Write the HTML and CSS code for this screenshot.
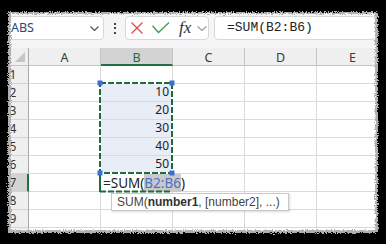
FILE: index.html
```html
<!DOCTYPE html>
<html>
<head>
<meta charset="utf-8">
<link rel="stylesheet" href="styles.css">
</head>
<body>
<div class="app">
  <div class="toolbar">
    <div class="namebox">
      <span class="nb-text">ABS</span>
      <svg class="chev" width="9" height="5" viewBox="0 0 9 5"><path d="M0.5 0.5 L4.5 4.5 L8.5 0.5" fill="none" stroke="#555" stroke-width="1.2"/></svg>
    </div>
    <div class="dots"><i></i><i></i><i></i></div>
    <div class="fxbox">
      <svg class="ico-x" width="12" height="12" viewBox="0 0 12 12"><path d="M0.5 0.5 L11.5 11.5 M11.5 0.5 L0.5 11.5" fill="none" stroke="#e5484d" stroke-width="1.3"/></svg>
      <svg class="ico-ok" width="18" height="12" viewBox="0 0 18 12"><path d="M0.5 3.8 L6.5 10.5 L17 0.5" fill="none" stroke="#3f9b54" stroke-width="1.3"/></svg>
      <span class="fx">fx</span>
      <svg class="chev2" width="10" height="5" viewBox="0 0 10 5"><path d="M0.5 0.5 L5 4.5 L9.5 0.5" fill="none" stroke="#9a9a9a" stroke-width="1.1"/></svg>
    </div>
    <div class="formula">=SUM(B2:B6)</div>
  </div>

  <div class="sheet">
    <div class="corner"><span class="tri"></span></div>
    <div class="colhead">A</div>
    <div class="colhead sel">B</div>
    <div class="colhead">C</div>
    <div class="colhead">D</div>
    <div class="colhead">E</div>

    <div class="rowhead">1</div><div class="cell"></div><div class="cell"></div><div class="cell"></div><div class="cell"></div><div class="cell"></div>
    <div class="rowhead">2</div><div class="cell"></div><div class="cell num in">10</div><div class="cell"></div><div class="cell"></div><div class="cell"></div>
    <div class="rowhead">3</div><div class="cell"></div><div class="cell num in">20</div><div class="cell"></div><div class="cell"></div><div class="cell"></div>
    <div class="rowhead">4</div><div class="cell"></div><div class="cell num in">30</div><div class="cell"></div><div class="cell"></div><div class="cell"></div>
    <div class="rowhead">5</div><div class="cell"></div><div class="cell num in">40</div><div class="cell"></div><div class="cell"></div><div class="cell"></div>
    <div class="rowhead">6</div><div class="cell"></div><div class="cell num in">50</div><div class="cell"></div><div class="cell"></div><div class="cell"></div>
    <div class="rowhead active">7</div><div class="cell"></div><div class="cell edit"><span>=SUM(<span class="ref">B2:B6</span>)</span></div><div class="cell"></div><div class="cell"></div><div class="cell"></div>
    <div class="rowhead">8</div><div class="cell"></div><div class="cell"></div><div class="cell"></div><div class="cell"></div><div class="cell"></div>
    <div class="rowhead">9</div><div class="cell"></div><div class="cell"></div><div class="cell"></div><div class="cell"></div><div class="cell"></div>
    <div class="rowhead">10</div><div class="cell"></div><div class="cell"></div><div class="cell"></div><div class="cell"></div><div class="cell"></div>
  </div>

  <svg class="range" width="386" height="244" viewBox="0 0 386 244">
    <rect x="100" y="83" width="72" height="90" fill="none" stroke="#fff" stroke-width="2"/>
    <rect x="100" y="83" width="72" height="90" fill="none" stroke="#1d6b3f" stroke-width="2" stroke-dasharray="6 2"/>
    <path d="M100 173 V192" stroke="#1d6b3f" stroke-width="2"/>
    <path d="M100 191.5 H172" stroke="#1d6b3f" stroke-width="2" stroke-dasharray="6 2"/>
    <rect x="97.5" y="80.5" width="5" height="5" fill="#3b6fd4"/>
    <rect x="169.5" y="80.5" width="5" height="5" fill="#3b6fd4"/>
    <rect x="97.5" y="170.5" width="5" height="5" fill="#3b6fd4"/>
    <rect x="169.5" y="170.5" width="5" height="5" fill="#3b6fd4"/>
  </svg>

  <div class="tip">SUM(<b>number1</b>, [number2], ...)</div>
</div>

<svg class="torn" width="386" height="244" viewBox="0 0 386 244">
  <defs>
    <filter id="rough" x="-10%" y="-10%" width="120%" height="120%">
      <feTurbulence type="fractalNoise" baseFrequency="0.9" numOctaves="2" seed="5" result="n"/>
      <feDisplacementMap in="SourceGraphic" in2="n" scale="5" xChannelSelector="R" yChannelSelector="G"/>
    </filter>
  </defs>
  <path fill-rule="evenodd" fill="#b0b0b0" filter="url(#rough)" d="M-20 -20 H406 V264 H-20 Z M11 14 H375 V230 H11 Z"/>
  <path fill-rule="evenodd" fill="#000" filter="url(#rough)" d="M-20 -20 H406 V264 H-20 Z M9 12 H377 Q378 12 378 13 V232 Q378 233 377 233 H9 Q8 233 8 232 V13 Q8 12 9 12 Z"/>
</svg>
</body>
</html>
```

FILE: styles.css
```css
body {
  margin: 0;
  width: 386px;
  height: 244px;
  background: #000;
  overflow: hidden;
  position: relative;
  font-family: "Noto Sans", "Liberation Sans", sans-serif;
}

.app {
  position: relative;
  width: 386px;
  height: 244px;
  background: #fff;
  overflow: hidden;
}

/* ---------- formula bar ---------- */
.toolbar {
  display: flex;
  align-items: center;
  height: 48px;
  padding-top: 8px;
  box-sizing: border-box;
  background: #f5f5f5;
}

.namebox {
  margin-left: 4px;
  width: 100px;
  height: 24px;
  box-sizing: border-box;
  background: #fff;
  border: 1px solid #d8d8d8;
  border-radius: 4px;
  display: flex;
  align-items: center;
  justify-content: space-between;
  padding: 0 4px 0 6px;
}

.nb-text {
  font-size: 12.5px;
  color: #2c4677;
  line-height: 16px;
}

.dots {
  margin-left: 10px;
  display: flex;
  flex-direction: column;
  gap: 2.5px;
}

.dots i {
  display: block;
  width: 2px;
  height: 2px;
  background: #444;
}

.fxbox {
  margin-left: 9px;
  width: 84px;
  height: 24px;
  box-sizing: border-box;
  background: #fff;
  border: 1px solid #d8d8d8;
  border-radius: 4px;
  display: flex;
  align-items: center;
  padding-left: 5px;
}

.ico-ok { margin-left: 9px; }

.fx {
  margin-left: 9px;
  font-family: "Liberation Serif", "DejaVu Serif", serif;
  font-style: italic;
  font-size: 17px;
  line-height: 18px;
  color: #333;
  width: 15px;
}

.chev2 { margin-left: 3px; }

.formula {
  margin-left: 5px;
  margin-right: 10px;
  flex: 1;
  height: 24px;
  box-sizing: border-box;
  background: #fff;
  border: 1px solid #d8d8d8;
  border-radius: 4px;
  padding-left: 12px;
  font-family: "Liberation Mono", "DejaVu Sans Mono", monospace;
  font-size: 13px;
  line-height: 22px;
  color: #222;
}

/* ---------- sheet ---------- */
.sheet {
  display: grid;
  grid-template-columns: 29px repeat(5, 72px);
  grid-auto-rows: 18px;
}

.sheet > div {
  box-sizing: border-box;
  border-right: 1px solid #dadada;
  border-bottom: 1px solid #dadada;
}

.corner {
  background: #efefef;
  position: relative;
  display: flex;
  align-items: flex-end;
  justify-content: flex-end;
  padding: 0 3px 3px 0;
}

.sheet > .corner,
.sheet > .rowhead {
  border-right-color: #a9a9a9;
}

.tri {
  width: 0;
  height: 0;
  border-left: 10px solid transparent;
  border-bottom: 10px solid #c6c6c6;
}

.colhead {
  background: #efefef;
  display: flex;
  align-items: center;
  justify-content: center;
  font-size: 12.5px;
  color: #3a3a3a;
  padding-top: 2px;
}

.sheet > .colhead {
  border-right-color: #c4c4c4;
  border-bottom-color: #c4c4c4;
}

.sheet > .corner {
  border-bottom-color: #c4c4c4;
}

.sheet > .colhead.sel {
  background: #d3d3d3;
  color: #1e6b45;
  border-bottom: 2px solid #1e7145;
}

.rowhead {
  background: #efefef;
  display: flex;
  align-items: center;
  justify-content: center;
  font-size: 12px;
  color: #333;
  padding-right: 2px;
}

.sheet > .rowhead {
  border-bottom-color: #d4d4d4;
}

.sheet > .rowhead.active {
  background: #d3d3d3;
  border-right: 2px solid #1e7145;
  padding-right: 1px;
}

.cell {
  background: #fff;
}

.cell.in {
  background: #e9edf6;
}

.num {
  display: flex;
  justify-content: flex-end;
  align-items: flex-end;
  padding: 0 3px 2px 0;
  font-size: 12px;
  line-height: 14px;
  color: #222;
}

.sheet > .edit {
  display: flex;
  align-items: flex-end;
  padding-left: 2px;
  white-space: nowrap;
  font-size: 13.5px;
  line-height: 15px;
  color: #222;
  border-right-color: transparent;
  position: relative;
  z-index: 1;
  overflow: visible;
}

.ref {
  color: #4a72c6;
  background: #c9c9c9;
}

/* ---------- overlays ---------- */
.range {
  position: absolute;
  left: 0;
  top: 0;
  z-index: 2;
  pointer-events: none;
}

.tip {
  position: absolute;
  left: 111px;
  top: 193px;
  width: 178px;
  height: 18px;
  box-sizing: border-box;
  border: 1px solid #c8c8c8;
  background: #fff;
  box-shadow: 1px 1px 2px rgba(0, 0, 0, 0.15);
  padding-left: 5px;
  font-family: "Liberation Sans", Arial, sans-serif;
  font-size: 12px;
  line-height: 16px;
  color: #444;
  white-space: nowrap;
  z-index: 3;
}

.tip b {
  color: #333;
}

.torn {
  position: absolute;
  left: 0;
  top: 0;
  z-index: 10;
}
```
